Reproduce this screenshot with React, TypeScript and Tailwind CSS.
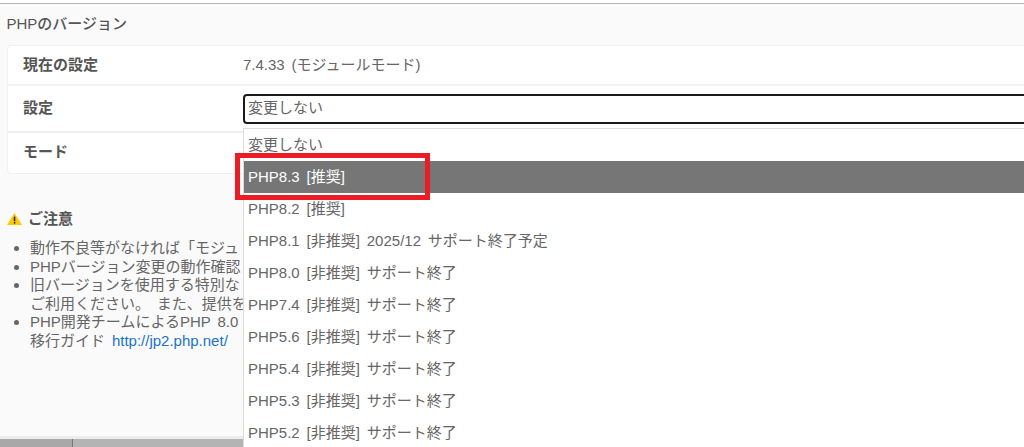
import React from 'react';

const font = { fontFamily: '"Liberation Sans", "Noto Sans CJK JP", sans-serif' };

const options = [
  '変更しない',
  'PHP8.3 [推奨]',
  'PHP8.2 [推奨]',
  'PHP8.1 [非推奨] 2025/12 サポート終了予定',
  'PHP8.0 [非推奨] サポート終了',
  'PHP7.4 [非推奨] サポート終了',
  'PHP5.6 [非推奨] サポート終了',
  'PHP5.4 [非推奨] サポート終了',
  'PHP5.3 [非推奨] サポート終了',
  'PHP5.2 [非推奨] サポート終了',
];

function WarningIcon() {
  return (
    <svg width="15" height="12" viewBox="0 0 15 12" className="shrink-0">
      <path d="M7.5 0 L15 12 H0 Z" fill="#ffc800" />
      <rect x="6.8" y="3.6" width="1.5" height="4.6" fill="#222" />
      <rect x="6.8" y="9" width="1.5" height="1.6" fill="#222" />
    </svg>
  );
}

export default function App() {
  return (
    <div
      className="relative h-[447px] w-[1024px] overflow-hidden bg-white text-[15px] text-[#666] [word-spacing:2.7px]"
      style={font}
    >
      <div className="h-[3px] bg-white" />
      <div className="flex h-[436px] flex-col border-t border-b-[3px] border-t-[#b5b5b5] border-b-[#ececec] bg-[#fafafa] pl-[7px]">
        <h2 className="mt-[11px] -ml-[0.5px] text-[15px] leading-[18px] font-medium text-[#555]">PHPのバージョン</h2>
        <div className="mt-[12px] -mr-2 h-[129px] rounded-l border border-[#f0f0f0] bg-white">
          <div className="flex h-[40px] items-center border-b-2 border-[#f3f3f3] pl-[15px]">
            <span className="w-[220px] font-bold text-[#555]">現在の設定</span>
            <span>7.4.33 (モジュールモード)</span>
          </div>
          <div className="flex h-[47px] items-center border-b-2 border-[#f0f0f0] pl-[15px]">
            <span className="w-[220px] font-bold text-[#555]">設定</span>
            <div className="flex h-[30px] flex-1 items-center rounded-[4px] border-2 border-[#1a1a1a] bg-white pl-[3px]">
              変更しない
            </div>
          </div>
          <div className="flex h-[38px] items-center pl-[15px]">
            <span className="font-bold text-[#555]">モード</span>
          </div>
        </div>
        <div className="mt-[35px] flex h-[20px] items-center gap-[6px]">
          <WarningIcon />
          <span className="font-bold text-[#555]">ご注意</span>
        </div>
        <ul className="mt-[10px] list-disc pl-[23px] leading-[18.6px] whitespace-nowrap">
          <li>動作不良等がなければ「モジュ</li>
          <li>PHPバージョン変更の動作確認</li>
          <li>
            旧バージョンを使用する特別な
            <br />
            ご利用ください。 また、提供を
          </li>
          <li>
            PHP開発チームによるPHP 8.0
            <br />
            移行ガイド <a className="text-[#1a73c8]">http://jp2.php.net/</a>
          </li>
        </ul>
      </div>
      <div className="flex h-[8px]">
        <div className="w-[72px] bg-[#a8a8a8]" />
        <div className="flex-1 border-l border-[#777] bg-[#b4b4b4]" />
      </div>

      {/* 開いたセレクトのリスト */}
      <div className="absolute top-[128px] left-[243px] w-[790px] border-t border-l border-[#dcdcdc] bg-white">
        {options.map((o, i) => (
          <div
            key={o}
            className={`flex h-[32px] items-center pl-[4px] whitespace-pre ${i === 1 ? 'bg-[#767676] text-white' : ''}`}
          >
            {o}
          </div>
        ))}
      </div>

      {/* 赤枠 */}
      <div className="absolute top-[153px] left-[235px] h-[47px] w-[195px] border-[5px] border-[#ed1c24]" />
    </div>
  );
}
